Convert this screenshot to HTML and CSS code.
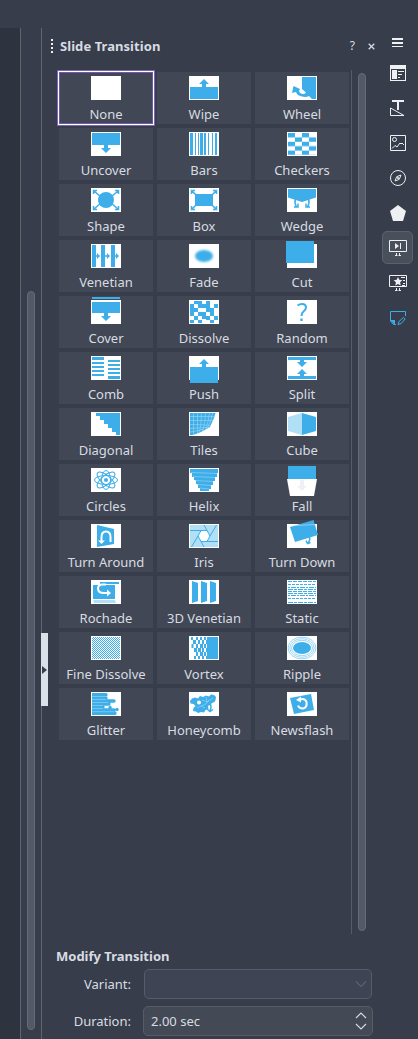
FILE: index.html
```html
<!DOCTYPE html>
<html lang="en">
<head>
<meta charset="utf-8">
<title>Slide Transition</title>
<link rel="stylesheet" href="styles.css">
</head>
<body>
<svg class="defs" width="0" height="0" aria-hidden="true">
  <defs>
    <pattern id="fine" width="2" height="2" patternUnits="userSpaceOnUse" x="1" y="1"><path fill="#fff" d="M0 0h1v1h-1zM1 1h1v1h-1z"/></pattern>
    <pattern id="check" width="14" height="8.8" patternUnits="userSpaceOnUse" x="1" y="1"><path class="b" d="M0 0h7v4.4h-7zM7 4.4h7v4.4h-7z"/></pattern>
    <filter id="soft" x="-30%" y="-30%" width="160%" height="160%"><feGaussianBlur stdDeviation="1.2"/></filter>
  </defs>
</svg>
<div class="window">
  <div class="topbar"></div>
  <div class="main">
    <div class="canvas"></div>
    <div class="gutter"><div class="thumb"></div></div>
    <section class="panel">
      <button class="handle" aria-label="Collapse"><svg width="7" height="8" viewBox="0 0 7 8"><path d="M1 0v8l5-4z"/></svg></button>
      <header class="head">
        <span class="grip"></span><h1 class="title">Slide Transition</h1>
        <span class="help">?</span>
        <svg class="close" width="7" height="7" viewBox="0 0 7 7"><path d="M.7.7l5.6 5.6M6.3.7L.7 6.3"/></svg>
      </header>
      <div class="list">
        <div class="grid">
          <div class="cell selected"><svg class="ico" viewBox="0 0 30 24"><path class="w" d="M0 0h30v24H0z"/></svg><span>None</span></div>
          <div class="cell"><svg class="ico" viewBox="0 0 30 24"><path class="w" d="M0 0h30v24H0z"/><path class="b" d="M1 11h12V8h-3l5-5 5 5h-3v3h12v12H1z"/></svg><span>Wipe</span></div>
          <div class="cell"><svg class="ico" viewBox="0 0 30 24"><path class="w" d="M0 0h30v24H0z"/><path class="b" d="M15 1h14v22h-4l-3-3q-3 1.500-7 .5-5-1-6-4.500l-4 1 1.500-7 6.500 3-1 2q1 3 4 3 2 0 3-1.500L15 13z"/></svg><span>Wheel</span></div>

          <div class="cell"><svg class="ico" viewBox="0 0 30 24"><path class="w" d="M0 0h30v24H0z"/><path class="b" d="M1 1h28v12H17v3h3l-5 5-5-5h3v-3H1z"/></svg><span>Uncover</span></div>
          <div class="cell"><svg class="ico" viewBox="0 0 30 24"><path class="w" d="M0 0h30v24H0z"/><path class="b" d="M1 1h3v22H1zM6 1h1v22H6zM9 1h1v22H9zM11 1h3v22h-3zM15 1h2v22h-2zM19 1h1v22h-1zM23 1h1v22h-1zM26 1h2v22h-2z"/></svg><span>Bars</span></div>
          <div class="cell"><svg class="ico" viewBox="0 0 30 24"><path class="w" d="M0 0h30v24H0z"/><path fill="url(#check)" d="M1 1h28v22H1z"/></svg><span>Checkers</span></div>

          <div class="cell"><svg class="ico" viewBox="0 0 30 24"><path class="w" d="M0 0h30v24H0z"/><circle class="b" cx="15" cy="12" r="8"/><path class="l" d="M3 3l7 6M27 3l-7 6M3 21l7-6M27 21l-7-6M2.500 6V2.500H6M24 2.500h3.500V6M2.500 18v3.500H6M24 21.500h3.500V18"/></svg><span>Shape</span></div>
          <div class="cell"><svg class="ico" viewBox="0 0 30 24"><path class="w" d="M0 0h30v24H0z"/><path class="b" d="M6 6h18v12H6z"/><path class="l" d="M3 3l5 5M27 3l-5 5M3 21l5-5M27 21l-5-5M2.500 6V2.500H6M24 2.500h3.500V6M2.500 18v3.500H6M24 21.500h3.500V18"/></svg><span>Box</span></div>
          <div class="cell"><svg class="ico" viewBox="0 0 30 24"><path class="w" d="M0 0h30v24H0z"/><path class="b" d="M1 1h28v8.500l-14 4.500L1 9.500z"/><path class="l" d="M8.500 11q-1.500 4 1 8M21.500 11q1.500 4-1 8M7 19h4v-3.500M23 19h-4v-3.500"/></svg><span>Wedge</span></div>

          <div class="cell"><svg class="ico" viewBox="0 0 30 24"><path class="w" d="M0 0h30v24H0z"/><path class="b" d="M1 1h4v22H1zM10 1h4v22h-4zM20 1h4v22h-4zM5 11.300h1V9l3 3-3 3v-2.300H5zM14 11.300h2V9l3 3-3 3v-2.300h-2zM24 11.300h1V9l3 3-3 3v-2.300h-1z"/></svg><span>Venetian</span></div>
          <div class="cell"><svg class="ico" viewBox="0 0 30 24"><path class="w" d="M0 0h30v24H0z"/><ellipse class="b" cx="15" cy="12" rx="9" ry="6" filter="url(#soft)"/></svg><span>Fade</span></div>
          <div class="cell"><svg class="ico" viewBox="0 0 30 24"><path class="w" d="M0 0h30v24H0z"/><path class="b" d="M-1-3h28v22H-1z"/></svg><span>Cut</span></div>

          <div class="cell"><svg class="ico" viewBox="0 0 30 24"><path class="w" d="M0 0h30v24H0z"/><path class="b" d="M1-3h28v2H1zM1 2h28v11H17v3h3l-5 5-5-5h3v-3H1z"/></svg><span>Cover</span></div>
          <div class="cell"><svg class="ico" viewBox="0 0 30 24"><path class="w" d="M0 0h30v24H0z"/><path class="b" d="M5 1h8v3H5zM17 1h4v3h-4zM25 4h4v4h-4zM1 4h4v4H1zM9 4h4v4H9zM13 4h8v4h-8zM5 8h4v4H5zM17 8h8v4h-8zM1 8h4v8H1zM9 12h4v4H9zM13 12h4v4h-4zM21 12h4v4h-4zM5 16h4v4H5zM13 16h4v3h-4zM17 16h4v4h-4zM25 16h4v4h-4zM1 20h4v3H1zM9 20h4v3H9zM21 20h4v3h-4z"/></svg><span>Dissolve</span></div>
          <div class="cell"><svg class="ico" viewBox="0 0 30 24"><path class="w" d="M0 0h30v24H0z"/><path class="l2" d="M10.500 5.500q2-1.500 4.500-1.500 4 0 4 3.500 0 2-2.500 4-2 1.500-2 4.500"/><path class="b" d="M13.300 18.500h2.400v2.500h-2.400z"/></svg><span>Random</span></div>

          <div class="cell"><svg class="ico" viewBox="0 0 30 24"><path class="w" d="M0 0h30v24H0z"/><path class="b" d="M1 1h12v3H1zM1 6h12v2H1zM1 10h12v2H1zM1 14h12v2H1zM1 18h12v2H1zM17 4h12v2H17zM17 8h12v2H17zM17 12h12v2H17zM17 16h12v2H17zM17 20h12v3H17z"/></svg><span>Comb</span></div>
          <div class="cell"><svg class="ico" viewBox="0 0 30 24"><path class="w" d="M0 0h30v24H0z"/><path class="b" d="M1 11h12V8h-3l5-5 5 5h-3v3h12v16H1z"/></svg><span>Push</span></div>
          <div class="cell"><svg class="ico" viewBox="0 0 30 24"><path class="w" d="M0 0h30v24H0z"/><path class="b" d="M1 1h28v3H17v2h3l-5 5-5-5h3V4H1zM1 23h28v-3H17v-2h3l-5-5-5 5h3v2H1z"/></svg><span>Split</span></div>

          <div class="cell"><svg class="ico" viewBox="0 0 30 24"><path class="w" d="M0 0h30v24H0z"/><path class="b" d="M5 1h24v22h-4v-3h-4v-4h-4v-4h-4V8H9V4H5z"/></svg><span>Diagonal</span></div>
          <div class="cell"><svg class="ico" viewBox="0 0 30 24"><path class="w" d="M0 0h30v24H0z"/><path class="b" d="M1 1h25.500l-1.500 5-4 9-9 5-8 3H1z"/><path class="h" d="M4.500 1v22M8.500 1v20M12.500 1q0 12-2 19M16.500 1q0 10-3 18M20.500 1q-1 9-4 16M23.500 1q-1 8-5 15M1 4.500h25M1 8.500h23M1 12.500q12 0 21 1M1 16.500q12-1 19-1M1 20q8-1 14-3"/></svg><span>Tiles</span></div>
          <div class="cell"><svg class="ico" viewBox="0 0 30 24"><path class="w" d="M0 0h30v24H0z"/><path class="p" d="M15 1v22L1 19V5z"/><path class="b" d="M15 1v22l14-4V5z"/></svg><span>Cube</span></div>

          <div class="cell"><svg class="ico" viewBox="0 0 30 24"><path class="w" d="M0 0h30v24H0z"/><g class="l1"><ellipse cx="15" cy="12" rx="11.500" ry="4.500"/><ellipse cx="15" cy="12" rx="11" ry="4.500" transform="rotate(40 15 12)"/><ellipse cx="15" cy="12" rx="9.500" ry="4.500" transform="rotate(90 15 12)"/><ellipse cx="15" cy="12" rx="11" ry="4.500" transform="rotate(140 15 12)"/></g><circle class="b" cx="15" cy="12" r="2"/></svg><span>Circles</span></div>
          <div class="cell"><svg class="ico" viewBox="0 0 30 24"><path class="w" d="M0 0h30v24H0z"/><path class="b" d="M1 1h28v4h-1v4h-2v4h-2v4h-2v4h-2v2h-9v-3H9v-4H7v-4H5V9H3V5H1z"/><path class="h" d="M2 4.500l26 1M4 8.500l22 1M6 12.500l18 1M8 16.500l14 1M11 20l9 1"/></svg><span>Helix</span></div>
          <div class="cell"><svg class="ico" viewBox="0 0 30 24"><path class="w" d="M0 11h30l-3 17H3z"/><path class="b" d="M1-2h28v13H1z"/><path class="g" d="M13 12h4v6h3l-5 5-5-5h3z"/></svg><span>Fall</span></div>

          <div class="cell"><svg class="ico" viewBox="0 0 30 24"><path class="w" d="M0 0h30v24H0z"/><path class="b" d="M6 1l17 4v15L6 23z"/><path class="wl" d="M19.500 18v-5q0-5.500-4.500-5.500T10.500 13v5"/><path class="w" d="M7 16.500h7L10.500 20z"/></svg><span>Turn Around</span></div>
          <div class="cell"><svg class="ico" viewBox="0 0 30 24"><path class="w" d="M0 0h30v24H0z"/><path class="p" d="M1 1h28v22H1z"/><path class="w" d="M12 6.500h6l3 5.500-3 5.500h-6L9 12z"/><path class="l1" d="M1 6.500h17M27.500 1L21 12l-3 5.500M15 1l6 11M29 17.500H12M2.500 23L9 12l3-5.500M9 12l6 11"/></svg><span>Iris</span></div>
          <div class="cell"><svg class="ico" viewBox="0 0 30 24"><path class="w" d="M0 0h30v24H0z"/><path class="b" d="M3 3l23.500-7L31 11 8 18z"/><path class="wl hair" d="M6 1.700L28.500.5"/><path class="l" d="M22.500 13q1 3-1.500 6M19 16.500l1.500 3 3-1"/></svg><span>Turn Down</span></div>

          <div class="cell"><svg class="ico" viewBox="0 0 30 24"><path class="w" d="M0 0h30v24H0z"/><path class="b" d="M2 5h22v14H2zM9 2h19v2H9z"/><path class="p" d="M2 20h22l1 3H3z"/><path class="wl" d="M15 4.500h-4Q7 5 7 8.500q0 4.500 6 4.500h4"/><path class="w" d="M16 9.500l4 3.500-4 3.500z"/></svg><span>Rochade</span></div>
          <div class="cell"><svg class="ico" viewBox="0 0 30 24"><path class="w" d="M0 0h30v24H0z"/><path class="b" d="M3 1l6 2v18l-6 2zM12 1l6 2v18l-6 2zM21 1l6 2v18l-6 2z"/></svg><span>3D Venetian</span></div>
          <div class="cell"><svg class="ico" viewBox="0 0 30 24"><path class="w" d="M0 0h30v24H0z"/><g class="st"><path stroke-dasharray="4 1" d="M1 1.500h28M1 11.500h28"/><path stroke-dasharray="3 1" d="M1 4.500h28M1 18.500h28"/><path stroke-dasharray="2 1 5 1" d="M1 7.500h28M1 15.500h28"/><path stroke-dasharray="5 1 3 1" d="M1 9.500h28M1 13.500h28M1 22.500h28"/></g></svg><span>Static</span></div>

          <div class="cell"><svg class="ico" viewBox="0 0 30 24"><path class="w" d="M0 0h30v24H0z"/><path class="b" d="M1 1h28v22H1z"/><path fill="url(#fine)" d="M1 1h28v22H1z"/></svg><span>Fine Dissolve</span></div>
          <div class="cell"><svg class="ico" viewBox="0 0 30 24"><path class="w" d="M0 0h30v24H0z"/><path class="b" d="M18 1h11v22H18zM2 1h2v3H2zM7 1h2v3H7zM11 1h2v3h-2zM15 1h2v3h-2zM4 4h3v4H4zM9 4h2v4H9zM13 4h2v4h-2zM17 4h1v4h-1zM2.500 8h2v4h-2zM7 8h2v4H7zM11 8h3v4h-3zM15 8h2v4h-2zM5 12h3v4H5zM9 12h3v4H9zM13 12h2v4h-2zM17 12h1v4h-1zM7 16h2v4H7zM11 16h3v4h-3zM15 16h2v4h-2zM5 20h2v3H5zM9 20h2v3H9zM13 20h2v3h-2zM17 20h1v3h-1z"/></svg><span>Vortex</span></div>
          <div class="cell"><svg class="ico" viewBox="0 0 30 24"><path class="w" d="M0 0h30v24H0z"/><ellipse class="b" cx="15" cy="12" rx="9" ry="6"/><g class="rp"><ellipse cx="15" cy="12" rx="10.500" ry="7.700"/><ellipse cx="15" cy="12" rx="12.200" ry="9.300"/><ellipse cx="15" cy="12" rx="13.900" ry="10.900"/></g></svg><span>Ripple</span></div>

          <div class="cell"><svg class="ico" viewBox="0 0 30 24"><path class="w" d="M0 0h30v24H0z"/><path class="b" d="M1 1h12v22H1z"/><path class="gl" d="M3 2.700h12M3 6h12M3 9h20M3 12h15M3 15h9M19 15.500h.1M3 18h20M26 17.500h.1M3 21.300h21"/><path class="h" d="M1 4.500h15M1 7.500h14M1 10.500h16M1 13.500h11M1 16.500h11M1 19.700h22"/></svg><span>Glitter</span></div>
          <div class="cell"><svg class="ico" viewBox="0 0 30 24"><path class="w" d="M0 0h30v24H0z"/><path class="b" d="M1 9l2-2.500 3-1 3 1 2-2.500 3 1 3-1.500 3 1 2-2 3 .5 2 2-.500 3-1 2-2.500 1-2 2-2 1 .5 3-3 1-1.500 2.500-3-.5-3 1-2-1.500-3-.5.500-3 2-2-2-2-3-.5z"/><circle class="w" cx="10" cy="10.500" r="2"/><path class="h" d="M13 8l5 2 6-4M12 14l5-2 3-4M8 16l4-2 4 2M17 5l1 5"/><path class="l" d="M21 11q2 4 0 8M18 17l3 2.500 3-2"/></svg><span>Honeycomb</span></div>
          <div class="cell"><svg class="ico" viewBox="0 0 30 24"><path class="w" d="M0 0h30v24H0z"/><path class="b" d="M3 6l21-4 3 16-20 4z"/><path class="wl" d="M13 7.500q5-1.500 6.500 2.500 1 5.500-3.500 6.500-4 0-5-3"/><path class="w" d="M9 8l5-3.500v6z"/></svg><span>Newsflash</span></div>
        </div>
        <div class="scroll"><div class="thumb"></div></div>
      </div>
      <div class="form">
        <h2 class="title">Modify Transition</h2>
        <div class="row variant"><label>Variant:</label><div class="field"><svg width="12" height="8" viewBox="0 0 12 8"><path d="M1 1.500l5 5 5-5"/></svg></div></div>
        <div class="row duration"><label>Duration:</label><div class="field"><span>2.00 sec</span><svg width="12" height="18" viewBox="0 0 12 18"><path d="M1 6l5-5 5 5M1 12l5 5 5-5"/></svg></div></div>
      </div>
    </section>
    <nav class="tabs">
      <div class="menu"><svg width="11" height="9" viewBox="0 0 11 9"><path class="i" d="M0 0h11v2H0zM0 4h11v2H0zM0 8h11v1H0z"/></svg></div>
      <div class="tab"><svg width="16" height="16" viewBox="0 0 16 16"><path class="i" fill-rule="evenodd" d="M0 0h16v16H0zM1 4v11h14V4zM2 5h5v9H2zM8 6h6v1H8zM8 9h4v1H8zM8 12h2v1H8z"/><path class="i" d="M2 5h5v9H2zM8 6h6v1H8zM8 9h4v1H8zM8 12h2v1H8z"/></svg></div>
      <div class="tab"><svg width="16" height="16" viewBox="0 0 16 16"><path class="i" d="M2 0h12v2H9v8H7V2H2z"/><path class="s" d="M.5 8v7.500H14z"/></svg></div>
      <div class="tab"><svg width="16" height="16" viewBox="0 0 16 16"><path class="s" d="M.5.5h15v15H.5zM2 13.500l3-3 2 1.500 3-4 1 1 1-1 2 2"/><circle class="s" cx="4.500" cy="4.500" r="2"/></svg></div>
      <div class="tab"><svg width="16" height="16" viewBox="0 0 16 16"><circle class="s" cx="8" cy="8" r="7.500"/><path class="s" d="M11 5L9.300 9.300 5 11l1.700-4.300z"/><circle class="i" cx="8" cy="8" r="1"/></svg></div>
      <div class="tab"><svg width="16" height="16" viewBox="0 0 16 16"><path class="i" d="M8 0l8 6-3 10H3L0 6z"/></svg></div>
      <div class="tab active"><svg width="18" height="16" viewBox="0 0 18 16"><path class="s" d="M.5.5h17v11H.5zM7.500 13v3M10.500 13v3M6 15.500h2.500M9.500 15.500H12M11.500 3v6"/><path class="i" d="M6 3l4 3-4 3z"/></svg></div>
      <div class="tab"><svg width="18" height="16" viewBox="0 0 18 16"><path class="s" d="M.5.500h17v11H.5zM7.500 13v3M10.500 13v3M6 15.500h2.500M9.500 15.500H12M12 2.500h4M14 5.500h2M14 8.500h2M13 10.500h3"/><path class="i" d="M9 2l1.300 2.800 3 .4-2.200 2.100.6 3.100L9 8.900l-2.700 1.500.6-3.100-2.200-2.100 3-.4z"/></svg></div>
      <div class="tab"><svg width="16" height="16" viewBox="0 0 16 16"><path class="n" d="M.5 11V1.500h15V6M.5 11l3 3.500H6M8 14.500l1-3 4.500-4 1.700 1.500-4 4.500z"/><path class="b" d="M0 10h5v5z"/></svg></div>
    </nav>
  </div>
</div>
</body>
</html>
```
FILE: styles.css
```css
* { box-sizing: border-box; }
body { margin: 0; background: #373d4a; color: #d8dce2; font: 13px/18px "Noto Sans", sans-serif; }
svg { display: block; flex: none; overflow: visible; }
.defs { position: absolute; }
.window { width: 418px; height: 1039px; display: flex; flex-direction: column; overflow: hidden; }
.topbar { height: 28px; flex: none; }
.main { flex: 1; display: flex; min-height: 0; }
.canvas { width: 20px; background: #2e343f; }
.gutter { width: 22px; border: solid #60656f; border-width: 0 1px; padding: 263px 6px 9px; display: flex; }
.thumb { width: 8px; border-radius: 4px; background: #535965; border: 1px solid #666b77; flex: 1; }
.panel { width: 340px; position: relative; display: flex; flex-direction: column; }
.handle { position: absolute; left: -1px; top: 605px; width: 7px; height: 73px; padding: 0; border: 0; background: #dce0e8; display: flex; align-items: center; }
.handle path { fill: #3b3f49; }
.head { height: 42px; padding: 0 7px 6px 9px; display: flex; align-items: center; flex: none; }
.grip { width: 2px; height: 14px; margin-right: 7px; background: repeating-linear-gradient(#eff0f1 0 2px, transparent 2px 4px); }
.title { margin: 0; font-size: 13px; font-weight: 700; line-height: 18px; }
.head .title { letter-spacing: .06px; }
.help { margin-left: auto; font-size: 12px; }
.close { margin: 0 0 0 13px; }
.close path { fill: none; stroke: #d3dae3; stroke-width: 1.3; }
.list { height: 864px; display: flex; flex: none; }
.grid { width: 310px; padding: 2px 2px 0 17px; display: grid; grid-template-columns: repeat(3, 94px); grid-auto-rows: 52px; gap: 4px; align-content: start; border-right: 1px solid #565c68; }
.cell { background: #414754; display: flex; flex-direction: column; align-items: center; padding-top: 4px; white-space: nowrap; }
.cell span { margin-top: 5px; }
.selected { box-shadow: inset 0 0 0 1px #6f5aa8, 0 0 0 1px #fff, 0 0 0 2px #7c64b8; }
.ico { width: 30px; height: 24px; }
.scroll { width: 20px; padding: 3px 6px; display: flex; }
.w { fill: #fff; }
.b { fill: #3daee9; }
.p { fill: #b1dff6; }
.g { fill: #eff0f1; }
.l, .l1, .l2, .st, .n, .gl { fill: none; stroke: #3daee9; stroke-width: 1.5; }
.l1, .st, .n { stroke-width: 1; }
.l2 { stroke-width: 2; }
.gl { stroke-width: 3.4; stroke-linecap: round; }
.h { fill: none; stroke: #9ed6f4; stroke-width: .6; }
.wl { fill: none; stroke: #fff; stroke-width: 2; }
.hair { stroke-width: .4; }
.rp { fill: none; stroke: #8fd0f2; stroke-width: .9; }
.form { padding: 13px 9px 0 14px; }
.row { display: flex; align-items: center; height: 30px; }
.row label { width: 75px; text-align: right; }
.field { height: 30px; margin-left: 12px; width: 230px; border: 1px solid #565c68; border-radius: 5px; background: #434955; display: flex; align-items: center; justify-content: space-between; padding: 0 5px 0 7px; }
.field path { fill: none; stroke: #d3dae3; stroke-width: 1.2; }
.variant { margin: 4px 0 7px; }
.variant .field { background: #3e4453; width: 228px; margin-left: 13px; justify-content: flex-end; padding-right: 4px; }
.variant path { stroke: #5c616e; }
.tabs { width: 31px; display: flex; flex-direction: column; gap: 2px; }
.menu { height: 26px; display: flex; justify-content: center; align-items: flex-start; padding-top: 10px; }
.tab { height: 33px; display: flex; align-items: center; justify-content: center; border-radius: 5px; }
.active { background: #4a505b; border: 1px solid #5c616d; }
.i { fill: #eff0f1; }
.s { fill: none; stroke: #eff0f1; stroke-width: 1; }
```
